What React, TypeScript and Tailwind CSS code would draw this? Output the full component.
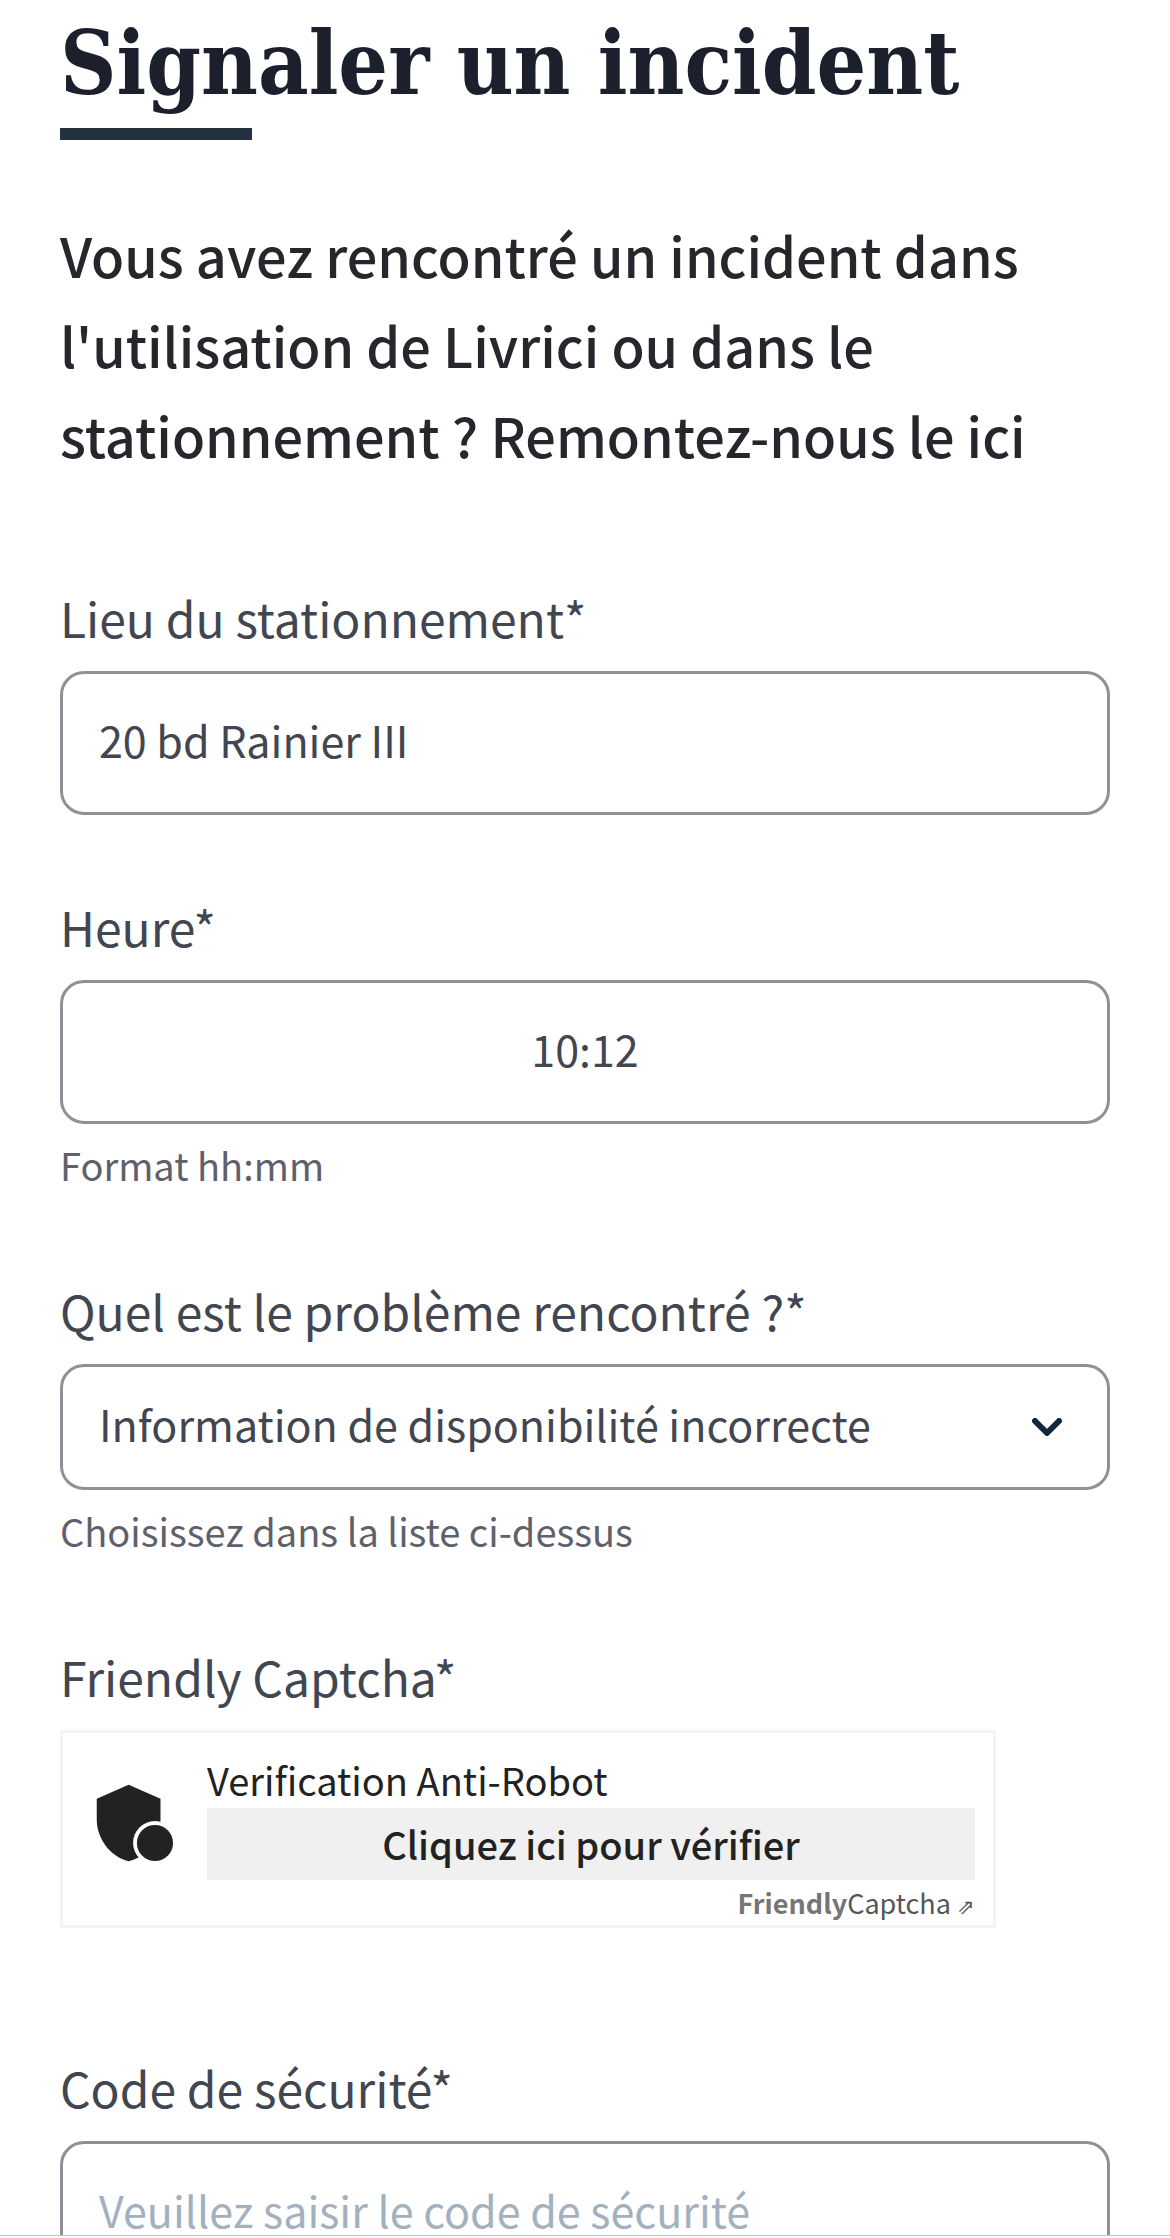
import { useState } from 'react';
import type { ReactNode } from 'react';

const fieldClass = `
    block w-full rounded-[24px] border-[3px] border-[#919096] bg-white
    px-9 text-[43px] leading-[64px] text-[#424650]
    placeholder:text-[#a3b0c0] placeholder:opacity-100
    outline-none focus:border-[#25303f]
`;

const problems = [
    'Information de disponibilité incorrecte',
    'Stationnement occupé',
    'Autre problème',
];

type FieldProps = {
    id: string;
    label: string;
    hint?: string;
    children: ReactNode;
};

function Field({ id, label, hint, children }: FieldProps) {
    return (
        <div>
            <label htmlFor={id} className="mb-[18px] block text-[48px] leading-[72px] text-[#424650]">
                {label}
            </label>
            {children}
            {hint && (
                <p id={`${id}-hint`} className="mt-[7px] text-[38px] leading-[68px] text-[#5e616b]">
                    {hint}
                </p>
            )}
        </div>
    );
}

function ShieldIcon() {
    return (
        <svg className="size-[102px]" viewBox="0 0 24 24" aria-hidden="true">
            <path
                fill="#222"
                d="M10.5 3L3 6.27v4.91c0 4.54 3.2 8.79 7.5 9.82c4.3-1.03 7.5-5.28 7.5-9.82V6.27z"
            />
            <circle cx="16.7" cy="16.7" r="5.15" fill="#fff" />
            <circle cx="16.7" cy="16.7" r="4.25" fill="#222" />
        </svg>
    );
}

function Captcha() {
    return (
        <div className="mb-12 flex max-w-[936px] items-start border-[3px] border-[#f4f4f4] bg-white pt-[18px] pr-[18px] text-[#222]">
            <div className="shrink-0 p-[21px]">
                <ShieldIcon />
            </div>
            <div className="min-w-0 flex-1">
                <p className="text-[38px] leading-[57px]">Verification Anti-Robot</p>
                <button
                    id="captcha"
                    type="button"
                    className="block w-full cursor-pointer bg-[#f0f0f0] text-[38px] leading-[72px] font-medium"
                >
                    Cliquez ici pour vérifier
                </button>
                <a
                    href="https://friendlycaptcha.com"
                    target="_blank"
                    rel="noopener noreferrer"
                    className="block text-right text-[27px] leading-[45px] text-[#565656]"
                >
                    <b className="font-bold text-[#757575]">Friendly</b>Captcha <span className="text-[21px] leading-none">⇗</span>
                </a>
            </div>
        </div>
    );
}

export default function App() {
    const [place, setPlace] = useState('20 bd Rainier III');
    const [hour, setHour] = useState('10:12');
    const [problem, setProblem] = useState(problems[0]);
    const [code, setCode] = useState('');

    return (
        <div className="flex h-screen flex-col bg-white pb-[2px] font-['Noto_Sans_CJK_JP','Noto_Sans',sans-serif]">
            <main className="min-h-0 flex-1 overflow-hidden px-[60px]">
                <h1 className="font-['DejaVu_Serif_Condensed','DejaVu_Serif',serif] text-[87px] leading-[128px] font-bold text-[#1c202d]">
                    Signaler un incident
                </h1>
                <div className="h-3 w-[192px] bg-[#25303f]" />

                <p className="mt-[70px] text-[54px] leading-[90px] font-medium text-[#25272d]">
                    Vous avez rencontré un incident dans l'utilisation de Livrici ou dans le
                    stationnement ? Remontez-nous le ici
                </p>

                <form className="mt-[101px] flex flex-col gap-[75px]" onSubmit={(e) => e.preventDefault()}>
                    <Field id="lieu" label="Lieu du stationnement*">
                        <input
                            id="lieu"
                            type="text"
                            required
                            className={`${fieldClass} pt-[33px] pb-[41px]`}
                            value={place}
                            onChange={(e) => setPlace(e.target.value)}
                        />
                    </Field>

                    <Field id="heure" label="Heure*" hint="Format hh:mm">
                        <input
                            id="heure"
                            type="text"
                            inputMode="numeric"
                            required
                            aria-describedby="heure-hint"
                            className={`${fieldClass} pt-[33px] pb-[41px] text-center`}
                            value={hour}
                            onChange={(e) => setHour(e.target.value)}
                        />
                    </Field>

                    <Field id="probleme" label="Quel est le problème rencontré ?*" hint="Choisissez dans la liste ci-dessus">
                        <div className="relative">
                            <select
                                id="probleme"
                                required
                                aria-describedby="probleme-hint"
                                className={`${fieldClass} appearance-none pt-6 pb-8`}
                                value={problem}
                                onChange={(e) => setProblem(e.target.value)}
                            >
                                {problems.map((p) => (
                                    <option key={p}>{p}</option>
                                ))}
                            </select>
                            <svg
                                className="pointer-events-none absolute inset-y-0 right-12 my-auto h-[18px] w-[30px]"
                                viewBox="0 0 30 18"
                                fill="none"
                                stroke="#11283f"
                                strokeWidth="6"
                                strokeLinecap="round"
                                strokeLinejoin="round"
                                aria-hidden="true"
                            >
                                <path d="M3 3L15 15L27 3" />
                            </svg>
                        </div>
                    </Field>

                    <Field id="captcha" label="Friendly Captcha*">
                        <Captcha />
                    </Field>

                    <Field id="code" label="Code de sécurité*">
                        <input
                            id="code"
                            type="text"
                            required
                            placeholder="Veuillez saisir le code de sécurité"
                            className={`${fieldClass} pt-[33px] pb-[41px]`}
                            value={code}
                            onChange={(e) => setCode(e.target.value)}
                        />
                    </Field>
                </form>
            </main>
            <div className="h-px shrink-0 bg-[#c4c4c6]" />
        </div>
    );
}
